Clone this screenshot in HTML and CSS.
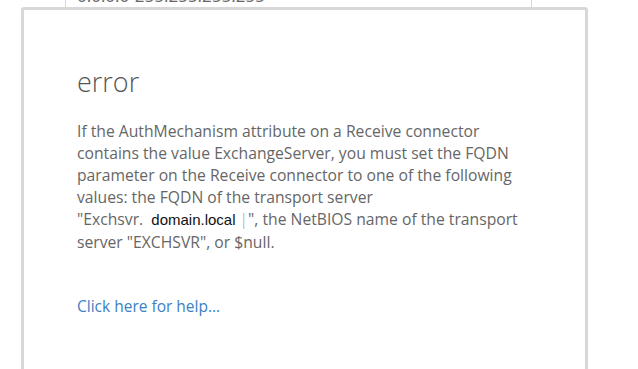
FILE: index.html
```html
<!DOCTYPE html>
<html lang="en">
<head>
    <meta charset="UTF-8">
    <meta name="viewport" content="width=device-width, initial-scale=1.0">
    <title>error</title>
    <link rel="stylesheet" href="styles.css">
</head>
<body>

<!-- Campo de fondo -->
    <div class="page">
        <div class="field">
            <span class="field-value">0.0.0.0-255.255.255.255</span>
        </div>
    </div>

<!-- Diálogo de error -->
    <section class="dialog">
        <h2 class="dialog-title">error</h2>
        <p class="dialog-text">
            If the AuthMechanism attribute on a Receive connector<br>
            contains the value ExchangeServer, you must set the FQDN<br>
            parameter on the Receive connector to one of the following<br>
            values: the FQDN of the transport server<br>
            "Exchsvr.&nbsp; <span class="host">domain.local</span> <span class="caret">|</span>", the NetBIOS name of the transport<br>
            server "EXCHSVR", or $null.
        </p>
        <a class="help-link" href="#">Click here for help...</a>
    </section>

</body>
</html>
```

FILE: styles.css
```css
/* Estilos generales */
    body {
        margin: 0;
        padding: 0;
        background: #fff;
        font-family: 'Open Sans', 'Noto Sans', sans-serif;
        color: #666;
        overflow: hidden;
        height: 369px;
    }

/* Campo de fondo */
    .page {
        padding-left: 65px;
    }

    .field {
        width: 467px;
        height: 8px;
        border-left: 1px solid #d6d6d6;
        border-right: 1px solid #d6d6d6;
        box-sizing: border-box;
        overflow: hidden;
    }

    .field-value {
        display: block;
        margin-top: -14px;
        padding-left: 11px;
        font-size: 17px;
        line-height: 20px;
        color: #666;
    }

/* Diálogo */
    .dialog {
        position: absolute;
        top: 7px;
        left: 21px;
        bottom: -10px;
        width: 567px;
        box-sizing: border-box;
        border: 3px solid #d8d8d8;
        border-radius: 3px;
        background: #fff;
        padding: 56px 40px 0 53px;
    }

    .dialog-title {
        margin: 0;
        font-size: 27px;
        font-weight: 300;
        line-height: 32px;
        color: #555;
    }

    .dialog-text {
        margin: 22px 0 0;
        font-size: 15.7px;
        line-height: 22px;
        color: #666;
    }

    .host {
        font-family: 'Liberation Sans', sans-serif;
        color: #111;
        font-size: 15px;
    }

    .caret {
        color: #999;
        font-weight: 300;
    }

    .help-link {
        display: inline-block;
        margin-top: 42px;
        font-size: 15.5px;
        color: #3b7fc4;
        text-decoration: none;
    }
```
